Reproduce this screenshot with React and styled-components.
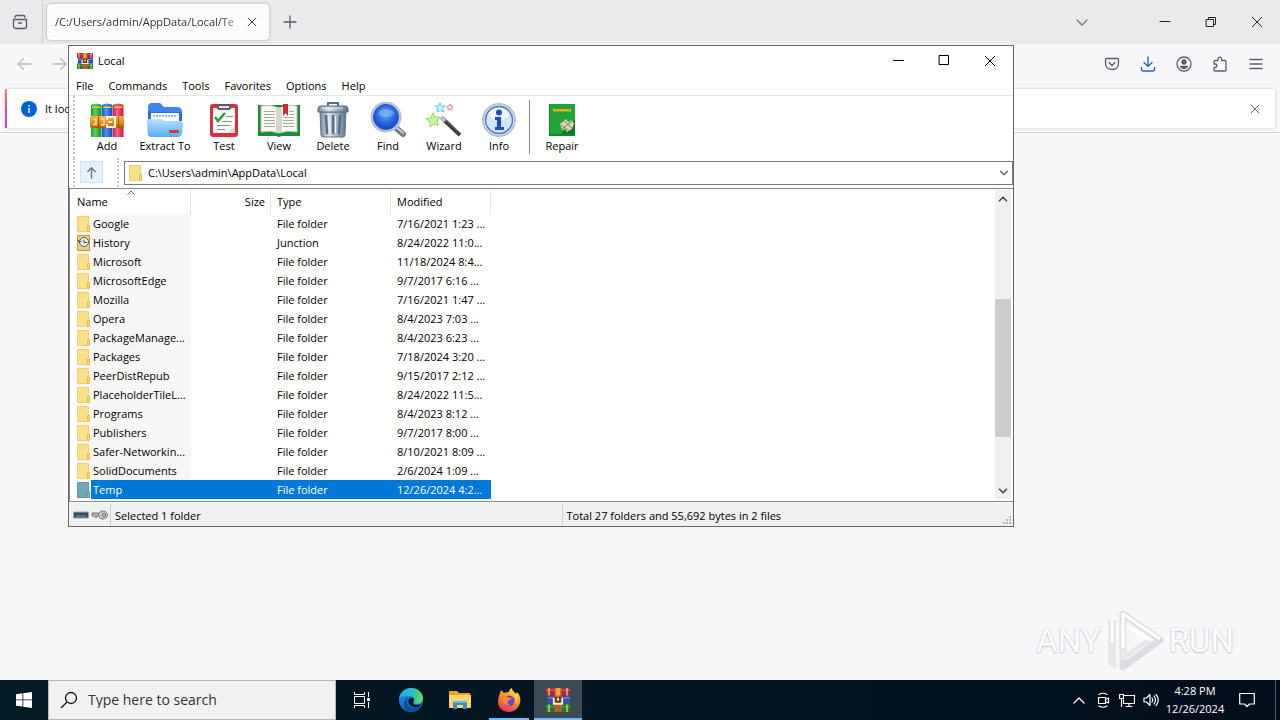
import React, { useState } from 'react'
import styled, { createGlobalStyle, css } from 'styled-components'

const files = [
  ['Google', 'File folder', '7/16/2021 1:23 ...'],
  ['History', 'Junction', '8/24/2022 11:0...'],
  ['Microsoft', 'File folder', '11/18/2024 8:4...'],
  ['MicrosoftEdge', 'File folder', '9/7/2017 6:16 ...'],
  ['Mozilla', 'File folder', '7/16/2021 1:47 ...'],
  ['Opera', 'File folder', '8/4/2023 7:03 ...'],
  ['PackageManage...', 'File folder', '8/4/2023 6:23 ...'],
  ['Packages', 'File folder', '7/18/2024 3:20 ...'],
  ['PeerDistRepub', 'File folder', '9/15/2017 2:12 ...'],
  ['PlaceholderTileL...', 'File folder', '8/24/2022 11:5...'],
  ['Programs', 'File folder', '8/4/2023 8:12 ...'],
  ['Publishers', 'File folder', '9/7/2017 8:00 ...'],
  ['Safer-Networkin...', 'File folder', '8/10/2021 8:09 ...'],
  ['SolidDocuments', 'File folder', '2/6/2024 1:09 ...'],
  ['Temp', 'File folder', '12/26/2024 4:2...'],
]

const menu = ['File', 'Commands', 'Tools', 'Favorites', 'Options', 'Help']

const Line = ({ d, size = 16, color = '#5b5b66', width = 1.3, children }) => (
  <svg
    width={size}
    height={size}
    viewBox='0 0 16 16'
    fill='none'
    stroke={color}
    strokeWidth={width}
    strokeLinecap='round'
    strokeLinejoin='round'
    aria-hidden='true'
  >
    {d && <path d={d} />}
    {children}
  </svg>
)

const Cross = ({ size = 12, color = '#222', width = 1.2 }) => (
  <svg width={size} height={size} viewBox='0 0 12 12' stroke={color} strokeWidth={width} aria-hidden='true'>
    <path d='M1 1l10 10M11 1L1 11' />
  </svg>
)

const Books = ({ size }) => (
  <svg width={size} height={size} viewBox='0 0 16 16' aria-hidden='true'>
    <path fill='#b5204a' d='M0 0h16v5H0z' />
    <path fill='#d8506c' d='M0 1h16v1H0z' />
    <path fill='#3a4fa5' d='M1 5h15v5.500H1z' />
    <path fill='#6d7fd0' d='M1 6h15v1H1z' />
    <path fill='#1b7a35' d='M0 10.500h16V16H0z' />
    <path fill='#3fa04a' d='M0 12h16v1H0z' />
    <path fill='#e8c15a' d='M1.500 0h1v5h-1zM1.500 11h1v5h-1zM13.500 0h1v5h-1zM13.500 11h1v5h-1z' />
    <path fill='#b55f22' d='M5.500 0h5v16h-5z' />
    <path fill='#f0a53a' d='M6.500 0h3v5h-3z' />
    <path fill='#6b3416' d='M5 6h6v5H5z' />
    <path fill='none' stroke='#fff3d8' strokeWidth='1.200' d='M5.200 6.500v4h5.600v-4M8 6.500v2' />
  </svg>
)

const AddIcon = () => (
  <svg width='34' height='36' viewBox='0 0 34 36' aria-hidden='true'>
    <defs>
      <linearGradient id='bookG'>
        <stop offset='0' stopColor='#1f9636' />
        <stop offset='.4' stopColor='#5cd35a' />
        <stop offset='1' stopColor='#128a2c' />
      </linearGradient>
      <linearGradient id='bookB'>
        <stop offset='0' stopColor='#1c50c6' />
        <stop offset='.4' stopColor='#4c92f4' />
        <stop offset='1' stopColor='#1744b4' />
      </linearGradient>
      <linearGradient id='bookR'>
        <stop offset='0' stopColor='#d02042' />
        <stop offset='.4' stopColor='#f8647e' />
        <stop offset='1' stopColor='#c81838' />
      </linearGradient>
      <linearGradient id='belt' x2='0' y2='1'>
        <stop offset='0' stopColor='#f9b53b' />
        <stop offset='.6' stopColor='#e08a1e' />
        <stop offset='1' stopColor='#a9560f' />
      </linearGradient>
    </defs>
    <path fill='url(#bookG)' d='M1 3q5-3 10.500 0v32H1z' />
    <path fill='url(#bookB)' d='M12 3q5-3 10.500 0v32H12z' />
    <path fill='url(#bookR)' d='M23 3q5-3 10.500 0v32H23z' />
    <path fill='#e9c94a' d='M2 4.500h8.500v1.500H2zM13 4.500h8.500v1.500H13zM24 4.500h8.500v1.500H24z' />
    <rect y='14' width='34' height='12' rx='2' fill='url(#belt)' />
    <path fill='none' stroke='#9c5414' d='M8.500 14.500v11M28.500 14.500v11' />
    <path fill='none' stroke='#ffe2a0' strokeWidth='1.500' d='M3 17.500h3v5H3M11 17h3v6h-3' />
    <path fill='none' stroke='#fff4e2' strokeWidth='2' d='M17 18v-3h8v10h-8v-3M18 20h4' />
  </svg>
)

const ExtractIcon = () => (
  <svg width='38' height='36' viewBox='0 0 38 36' aria-hidden='true'>
    <defs>
      <linearGradient id='exFront' x2='0' y2='1'>
        <stop offset='0' stopColor='#b6e2ff' />
        <stop offset='1' stopColor='#5aaaf4' />
      </linearGradient>
    </defs>
    <path fill='#4284ef' d='M2 5q0-4 4-4h7q2 0 3 2l2 2h13q5 0 5 5v9H2z' />
    <path fill='#2e6ddd' d='M2 10h34v9H2z' />
    <path fill='#fff' d='M5 11h28v10H5z' />
    <path stroke='#a4b7cc' strokeWidth='2' strokeDasharray='2 1' d='M7 14h24' />
    <path
      fill='url(#exFront)'
      d='M1 21q-.5-4 3-4H14q2 0 3 1t3 1h14q3.500 0 3 4l-1 8q-.5 4-4 4H5q-3 0-3.300-4z'
    />
    <rect x='23' y='28' width='10' height='3' rx='1' fill='#dc3c2c' />
  </svg>
)

const TestIcon = () => (
  <svg width='30' height='36' viewBox='0 0 30 36' aria-hidden='true'>
    <rect x='1' y='2' width='28' height='33' rx='3' fill='#d9303b' />
    <rect x='4' y='6' width='22' height='25' fill='#fbfbfb' />
    <path fill='#d5d5d8' d='M26 31h-7l7-7z' />
    <rect x='8' y='2' width='14' height='6' rx='2' fill='#585d66' />
    <path fill='#e3e5e8' d='M10 4h10v2H10z' />
    <path fill='none' stroke='#2d9c3a' strokeWidth='2.500' d='M6 15l3 4 7-8' />
    <path stroke='#8b8e94' d='M17 14.500h7M13 19.500h10M8 23.500h13M8 27.500h8' />
  </svg>
)

const ViewIcon = () => (
  <svg width='44' height='36' viewBox='0 0 44 36' aria-hidden='true'>
    <path fill='#1f8a3c' d='M1 3h42v31H25l-3 1-3-1H1z' />
    <path fill='#f9f8f1' stroke='#c5c3b5' d='M4 4q10-2 18 2v25q-8-3-18-1zM40 4q-10-2-18 2v25q8-3 18-1z' />
    <path fill='#d8d6cc' d='M19 5l3 1 3-1v25l-3 1-3-1z' />
    <path
      fill='none'
      stroke='#aaa99f'
      d='M7 9.500h11M7 12.500h11M7 15.500h11M7 18.500h11M7 21.500h11M7 24.500h11M26 15.500h11M26 18.500h11M26 21.500h11M26 24.500h11M32 9.500h5M32 12.500h5'
    />
    <path fill='#cf2632' d='M26 2h5v12l-2.500-3L26 14z' />
  </svg>
)

const DeleteIcon = () => (
  <svg width='34' height='36' viewBox='0 0 34 36' aria-hidden='true'>
    <defs>
      <linearGradient id='bin'>
        <stop offset='0' stopColor='#70869a' />
        <stop offset='.35' stopColor='#dce5ec' />
        <stop offset='1' stopColor='#5f7488' />
      </linearGradient>
    </defs>
    <path fill='none' stroke='#5c6c7a' strokeWidth='2' d='M12 4V1h10v3' />
    <path fill='url(#bin)' stroke='#62788b' d='M4 10h26l-1 23q-.2 2-2 2H7q-1.800 0-2-2z' />
    <path stroke='#587087' strokeWidth='2.500' strokeLinecap='round' d='M10 14l1 17M17 14v17M24 14l-1 17' />
    <path stroke='#eff4f8' d='M12.500 14l1 17M19.500 14v17' />
    <path fill='url(#bin)' stroke='#566b7d' d='M2 10V7q0-3 3-3h24q3 0 3 3v3z' />
    <path stroke='#e5ecf2' d='M5 6h22' />
  </svg>
)

const FindIcon = () => (
  <svg width='38' height='36' viewBox='0 0 38 36' aria-hidden='true'>
    <defs>
      <radialGradient id='lens' cy='.4'>
        <stop offset='0' stopColor='#6cacf7' />
        <stop offset='.6' stopColor='#2c6be0' />
        <stop offset='1' stopColor='#1a4cc8' />
      </radialGradient>
    </defs>
    <path stroke='#777c86' strokeWidth='6' strokeLinecap='round' d='M27 26l7 6' />
    <path stroke='#c9cdd4' strokeWidth='2' strokeLinecap='round' d='M27 25l7 6' />
    <circle cx='17' cy='15' r='14' fill='url(#lens)' stroke='#b4c3dc' strokeWidth='3' />
    <circle cx='17' cy='15' r='12.500' fill='none' stroke='#2a52b5' />
    <ellipse cx='17' cy='11' rx='8' ry='4' fill='#8bc0fa' opacity='.5' />
  </svg>
)

const WizardIcon = () => (
  <svg width='38' height='36' viewBox='0 0 38 36' aria-hidden='true'>
    <path stroke='#3a3b40' strokeWidth='4' d='M17 16l18 17' />
    <path stroke='#8b8d94' strokeWidth='1' d='M18 15l17 16' />
    <path stroke='#bcbec4' strokeWidth='4' d='M16 15l4 4' />
    <path fill='#c8f5a0' stroke='#8fdc5a' d='M8 11l2 4 5 0-3 4 1.500 4.500-4.500-1.500-4 3v-5l-4-3 5-1.500z' />
    <path fill='#c8f2fc' stroke='#5fcdea' d='M15 1l1.500 3H20l-2.500 2.500L19 10l-3.500-1.500L12 10l.500-4L10 4h3.500z' />
    <path fill='#fff0f2' stroke='#ee8396' d='M25 2l1 2h2l-1.500 2 .500 2-2-1-2 1v-2.500L21.500 4H24z' />
  </svg>
)

const InfoIcon = () => (
  <svg width='36' height='36' viewBox='0 0 36 36' aria-hidden='true'>
    <circle cx='18' cy='18' r='16' fill='#e4edf8' stroke='#b9c1cd' strokeWidth='2' />
    <circle cx='18' cy='18' r='13.500' fill='#d2e6ff' stroke='#4a78d2' strokeWidth='1.500' />
    <ellipse cx='18' cy='12' rx='10' ry='6' fill='#f2f8ff' />
    <circle cx='18' cy='10.500' r='3' fill='#1d4cc8' />
    <path fill='#1d4cc8' d='M14 15h6v10h3v3h-9v-3h2v-7h-2z' />
  </svg>
)

const RepairIcon = () => (
  <svg width='28' height='36' viewBox='0 0 28 36' aria-hidden='true'>
    <path fill='#1fa63a' d='M1 2h26v32H1z' />
    <path fill='#12862c' d='M1 2h1v32H1zM2 32h25v2H2z' />
    <path fill='#f0a528' d='M5 7h18v2.500H5z' />
    <path fill='#107a2a' d='M27 17v15H13z' />
    <path fill='#d9d6b4' d='M12 22l6-5 2 3 4-2 2 4-2 5-5 3-2-3-3 1z' />
    <path stroke='#7f7c5c' d='M16 19l8 7M13 23l8 6M14 27l10-8' />
  </svg>
)

const FolderIcon = ({ name, selected }) => (
  <svg width='14' height='16' viewBox='0 0 14 16' aria-hidden='true'>
    <path fill={selected ? '#6fa9b6' : '#fbe08a'} stroke={selected ? '#5e9aaa' : '#ecd07a'} d='M.500.500h11v15H.500z' />
    <path fill={selected ? '#82b6ba' : '#ffd766'} stroke={selected ? '#5e9aaa' : '#e5c050'} d='M10.500 9.500h2v6h-2z' />
    {name === 'History' && (
      <>
        <path fill='#e9cf7c' stroke='#b79c45' d='M.500.500h12v15H.500z' />
        <circle cx='7' cy='7' r='4.500' fill='#f7f7f4' stroke='#555' />
        <path fill='none' stroke='#333' d='M7 4.500V7.500h3M1 5l1.500 2.500L4.500 6' />
      </>
    )}
  </svg>
)

const tools = [
  { label: 'Add', width: 54, Icon: AddIcon },
  { label: 'Extract To', width: 62, Icon: ExtractIcon },
  { label: 'Test', width: 56, Icon: TestIcon },
  { label: 'View', width: 54, Icon: ViewIcon },
  { label: 'Delete', width: 54, Icon: DeleteIcon },
  { label: 'Find', width: 56, Icon: FindIcon },
  { label: 'Wizard', width: 56, Icon: WizardIcon },
  { label: 'Info', width: 54, Icon: InfoIcon },
]

const FirefoxBar = () => (
  <>
    <TabStrip>
      <RecentButton aria-label='Recent browsing'>
        <Line d='M1.500 5.500h13v7a2 2 0 0 1-2 2h-9a2 2 0 0 1-2-2zM3 3.500V3q0-1.500 1.500-1.500h7Q13 1.500 13 3v.500M6.500 9h3' />
      </RecentButton>
      <Tab>
        <TabTitle>/C:/Users/admin/AppData/Local/Te</TabTitle>
        <TabClose aria-label='Close tab'>
          <Cross size={10} color='#444' />
        </TabClose>
      </Tab>
      <NewTab aria-label='New tab'>
        <Line d='M8 2v12M2 8h12' />
      </NewTab>
      <Spacer />
      <ListTabs aria-label='List all tabs'>
        <Line d='M3 6l5 5 5-5' color='#777' />
      </ListTabs>
      <CaptionButton aria-label='Minimize browser'>
        <Line d='M3 7.500h10' color='#222' width={1} />
      </CaptionButton>
      <CaptionButton aria-label='Restore browser'>
        <Line d='M3.500 5.500h7v7h-7zM5.500 5V3.500h7v7H11' color='#222' width={1} />
      </CaptionButton>
      <CaptionButton aria-label='Close browser'>
        <Cross color='#222' width={1} />
      </CaptionButton>
    </TabStrip>
    <NavBar>
      <NavButton aria-label='Back'>
        <Line d='M15 8H2M7.500 2.500L2 8l5.500 5.500' color='#b9b9c0' />
      </NavButton>
      <NavButton aria-label='Forward'>
        <Line d='M1 8h13M8.500 2.500L14 8l-5.500 5.500' color='#b9b9c0' />
      </NavButton>
      <Spacer />
      <NavButton aria-label='Save to Pocket'>
        <Line d='M2.500 2.500h11q1 0 1 1V7q0 6.500-6.500 6.500T1.500 7V3.500q0-1 1-1zM5 6.500l3 3 3-3' />
      </NavButton>
      <NavButton aria-label='Downloads'>
        <Line d='M8 1v9.500M4 6.500l4 4 4-4M1.500 11.500V13q0 2 2 2h9q2 0 2-2v-1.500' color='#2a62d0' width={1.4} />
      </NavButton>
      <NavButton aria-label='Account'>
        <Line>
          <circle cx='8' cy='8' r='7' />
          <circle cx='8' cy='6' r='2' fill='#5b5b66' />
          <path fill='#5b5b66' d='M4.500 10.500h7q-1 2-3.500 2t-3.500-2z' />
        </Line>
      </NavButton>
      <NavButton aria-label='Extensions'>
        <Line d='M2 5.500q0-1 1-1h3V3a1.800 1.800 0 0 1 3.600 0v1.500H13q1 0 1 1V14q0 1-1 1H3q-1 0-1-1v-2.500h1.500a1.800 1.800 0 0 0 0-3.500H2z' />
      </NavButton>
      <NavButton aria-label='Menu'>
        <Line d='M2 3.500h12M2 8h12M2 12.500h12' />
      </NavButton>
    </NavBar>
    <NoticeArea>
      <Notice>
        <svg width='16' height='16' viewBox='0 0 16 16' aria-hidden='true'>
          <circle cx='8' cy='8' r='8' fill='#0060df' />
          <path stroke='#fff' strokeWidth='1.500' d='M8 7v5M8 4v1.500' />
        </svg>
        <NoticeText>It loo</NoticeText>
        <NoticeClose aria-label='Dismiss'>
          <Cross size={10} color='#444' width={1} />
        </NoticeClose>
      </Notice>
    </NoticeArea>
  </>
)

const FileList = () => {
  const [selected, setSelected] = useState('Temp')

  return (
    <ListPane>
      <Table>
        <colgroup>
          <col width='121' />
          <col width='80' />
          <col width='120' />
          <col width='100' />
        </colgroup>
        <thead>
          <tr>
            <Th>
              <SortMark width='8' height='5' viewBox='0 0 8 5'>
                <path fill='none' stroke='#666' d='M.500 4.500L4 1l3.500 3.500' />
              </SortMark>
              Name
            </Th>
            <Th $right>Size</Th>
            <Th>Type</Th>
            <Th>Modified</Th>
          </tr>
        </thead>
        <tbody>
          {files.map(([name, type, modified]) => (
            <Row key={name} $selected={name === selected} onClick={() => setSelected(name)}>
              <NameCell>
                <NameInner>
                  <FolderIcon name={name} selected={name === selected} />
                  <NameLabel>{name}</NameLabel>
                </NameInner>
              </NameCell>
              <Td />
              <Td>{type}</Td>
              <Td>{modified}</Td>
            </Row>
          ))}
        </tbody>
      </Table>
      <ScrollBar>
        <ScrollButton aria-label='Scroll up'>
          <Line d='M4 10l4-4 4 4' size={14} color='#505050' width={2} />
        </ScrollButton>
        <ScrollTrack>
          <Thumb />
        </ScrollTrack>
        <ScrollButton aria-label='Scroll down'>
          <Line d='M4 6l4 4 4-4' size={14} color='#505050' width={2} />
        </ScrollButton>
      </ScrollBar>
    </ListPane>
  )
}

const ArchiveWindow = () => {
  const [path, setPath] = useState('C:\\Users\\admin\\AppData\\Local')

  return (
    <Window>
      <TitleBar>
        <Books size={16} />
        <Title>Local</Title>
        <CaptionButton aria-label='Minimize'>
          <Line d='M3.500 7.500h10' color='#000' width={1} />
        </CaptionButton>
        <CaptionButton aria-label='Maximize'>
          <Line d='M3.500 2.500h9v9h-9z' color='#000' width={1} />
        </CaptionButton>
        <CaptionButton aria-label='Close'>
          <Cross color='#000' width={1} />
        </CaptionButton>
      </TitleBar>
      <MenuBar>
        {menu.map((item) => (
          <MenuItem key={item}>{item}</MenuItem>
        ))}
      </MenuBar>
      <ToolBar>
        <Grip />
        {tools.map(({ label, width, Icon }) => (
          <Tool key={label} $width={width}>
            <Icon />
            {label}
          </Tool>
        ))}
        <Divider />
        <Tool $width={58}>
          <RepairIcon />
          Repair
        </Tool>
      </ToolBar>
      <AddressRow>
        <Grip />
        <UpButton aria-label='Up one level'>
          <Line d='M8 14V3M4 7l4-4 4 4' color='#6f7c87' width={1.5} size={15} />
        </UpButton>
        <Grip />
        <AddressBox>
          <FolderIcon />
          <AddressInput aria-label='Path' value={path} onChange={(e) => setPath(e.target.value)} />
          <DropButton aria-label='Show paths'>
            <Line d='M4 6l4 4 4-4' color='#555' size={14} />
          </DropButton>
        </AddressBox>
      </AddressRow>
      <FileList />
      <StatusBar>
        <StatusIcons>
          <svg width='16' height='8' viewBox='0 0 16 8' aria-hidden='true'>
            <path fill='#3c4a54' stroke='#9aa8b3' d='M.500 1h15v6H.500z' />
            <path stroke='#6aa6b4' d='M3 5h10' />
          </svg>
          <svg width='18' height='12' viewBox='0 0 18 12' aria-hidden='true'>
            <path fill='#b5b5b5' stroke='#7c7c7c' d='M1 4h8v3H6l-1 2-1.500-2H1z' />
            <ellipse cx='12' cy='6' rx='4.500' ry='4' fill='#c9c9c9' stroke='#7c7c7c' />
            <circle cx='13' cy='6' r='1.500' fill='#fff' stroke='#555' />
          </svg>
        </StatusIcons>
        <StatusCell>Selected 1 folder</StatusCell>
        <StatusCell>Total 27 folders and 55,692 bytes in 2 files</StatusCell>
        <Resize width='10' height='10' viewBox='0 0 10 10'>
          <path fill='#bbb' d='M7 1h2v2H7zM4 4h2v2H4zM7 4h2v2H7zM1 7h2v2H1zM4 7h2v2H4zM7 7h2v2H7z' />
        </Resize>
      </StatusBar>
    </Window>
  )
}

const Brand = () => (
  <Watermark>
    <span>ANY</span>
    <svg width='60' height='66' viewBox='0 0 60 66' aria-hidden='true'>
      <g fill='none' strokeLinejoin='round'>
        <path stroke='#dedee2' strokeWidth='7' d='M7 12v44M18 6l37 26-37 27z' />
        <path stroke='#e8e8eb' strokeWidth='5' d='M7 12v44l5 2M18 14v36l26-18' />
        <path stroke='#ffffff' strokeWidth='3' d='M7 34V12l4-3M18 40V6l37 25M22 18l22 14' />
      </g>
    </svg>
    <span>RUN</span>
  </Watermark>
)

const TaskBar = () => (
  <Tasks>
    <StartButton aria-label='Start'>
      <svg width='16' height='16' viewBox='0 0 16 16' fill='#fff' aria-hidden='true'>
        <path d='M0 2.200l6.500-.900v6.200H0zM7.300 1.200L16 0v7.500H7.300zM0 8.300h6.500v6.300L0 13.700zM7.300 8.300H16V16l-8.700-1.200z' />
      </svg>
    </StartButton>
    <SearchBox>
      <svg width='18' height='18' viewBox='0 0 18 18' fill='none' stroke='#111' strokeWidth='1.300' aria-hidden='true'>
        <circle cx='11' cy='7' r='5.500' />
        <path d='M7 11l-6 6' />
      </svg>
      <SearchInput aria-label='Search' placeholder='Type here to search' />
    </SearchBox>
    <Apps>
      <AppButton aria-label='Task view'>
        <svg width='18' height='18' viewBox='0 0 18 18' fill='none' stroke='#fff' aria-hidden='true'>
          <path d='M1.500 1v2.500h10V1M1.500 17v-2.500h10V17M1.500 5.500h10v7h-10zM15.500 1v5M15.500 11v6' />
          <path fill='#fff' d='M14.500 7.500h2v2h-2z' />
        </svg>
      </AppButton>
      <AppButton aria-label='Edge'>
        <svg width='24' height='24' viewBox='0 0 24 24' aria-hidden='true'>
          <defs>
            <linearGradient id='edgeTop'>
              <stop offset='0' stopColor='#1fa6e8' />
              <stop offset='.6' stopColor='#2fc2b8' />
              <stop offset='1' stopColor='#68d94c' />
            </linearGradient>
            <linearGradient id='edgeLow' x2='0' y2='1'>
              <stop offset='0' stopColor='#1a8fe0' />
              <stop offset='1' stopColor='#1266c4' />
            </linearGradient>
          </defs>
          <circle cx='12' cy='12' r='12' fill='url(#edgeLow)' />
          <path fill='url(#edgeTop)' d='M0 11C1 4 6 0 12 0c7 0 12 5 12 10 0 4-3 6-6 6-3 0-4-1-3-3 1-3-1-5-5-5-5 0-9 1-10 3z' />
          <path fill='#0c4f97' d='M9 10c-2 3-1 9 5 10 3 .500 6-.500 8-2-2 4-6 6-10 6-5-1-8-5-7-9 .500-3 2-5 4-5z' />
          <path fill='#031a26' d='M14 10c-3-1-5 1-4.500 4 .500 4 5 6 10 5l4-4c-3 2-7 3-9 1-1-1 .500-2 .500-3.500 0-1-.300-2-1-2.500z' />
        </svg>
      </AppButton>
      <AppButton aria-label='File Explorer'>
        <svg width='22' height='20' viewBox='0 0 22 20' aria-hidden='true'>
          <path fill='#e9a229' d='M0 1h8l2 2h11v4H0z' />
          <path fill='#ffd767' d='M0 5h22v13H0z' />
          <path fill='#3b8fc9' d='M4 11h14v8h-4v-4H8v4H4z' />
          <path fill='#69b9e8' d='M4 11h14v2H4z' />
        </svg>
      </AppButton>
      <AppButton aria-label='Firefox' $bar={40}>
        <svg width='24' height='24' viewBox='0 0 24 24' aria-hidden='true'>
          <defs>
            <linearGradient id='fox' x1='.8' y1='0' x2='.3' y2='1'>
              <stop offset='0' stopColor='#ffe848' />
              <stop offset='.45' stopColor='#ff9626' />
              <stop offset='1' stopColor='#f02a60' />
            </linearGradient>
          </defs>
          <path
            fill='url(#fox)'
            d='M3 5l1-3 3 3c2-1 4-1 5-1 0-2 1-3 3-4 0 3 3 4 4 6l1-2c3 3 4 7 3 11-1 5-6 9-11 9C6 24 1 20 1 14c0-4 1-6 2-9z'
          />
          <circle cx='12' cy='13' r='5.500' fill='#7540d4' />
          <path fill='#ff8b2b' d='M5 9c3-2 5-1 7 1l3 0c-1 2-3 2-4 3-1 2 0 4 3 4-4 2-9-1-9-8z' />
          <path fill='#ffd646' d='M14 4c4 2 6 7 4 12 3-3 3-8 1-10z' />
        </svg>
      </AppButton>
      <AppButton aria-label='WinRAR' $bar={48} $active>
        <Books size={24} />
      </AppButton>
    </Apps>
    <Spacer />
    <TrayButton aria-label='Show hidden icons'>
      <Line d='M3 11l5-5 5 5' color='#fff' />
    </TrayButton>
    <TrayButton aria-label='Meet now'>
      <Line color='#fff' width={1.2} d='M3.500 5.500h7v6h-7zM10.500 7.500l3-1.500v5l-3-1.500M4 2.500q4-2.500 8 0M4 14q4 2.500 8 0' />
    </TrayButton>
    <TrayButton aria-label='Network'>
      <Line color='#fff' width={1.2} d='M5 3.500h10.500v8H4.500V8M7 14.500h6M10 11.500v3M.500 2.500h4v4h-4zM2.500 6.500v8' />
    </TrayButton>
    <TrayButton aria-label='Volume'>
      <Line color='#fff' width={1.2} d='M1 6h2.500L7 2.500v11L3.500 10H1zM9 6q1.500 2 0 4M11 4q3 4 0 8M13 2.500q4.500 5.500 0 11' />
    </TrayButton>
    <Clock>
      <time>4:28 PM</time>
      <time>12/26/2024</time>
    </Clock>
    <NoticesButton aria-label='Notifications'>
      <Line color='#fff' d='M.700 1.500h14.600v10.500H10.500L8 14.500 5.500 12H.700z' width={1.2} />
    </NoticesButton>
    <ShowDesktop aria-label='Show desktop' />
  </Tasks>
)

const App = () => (
  <Desktop>
    <GlobalStyle />
    <Browser>
      <FirefoxBar />
      <Brand />
    </Browser>
    <ArchiveWindow />
    <TaskBar />
  </Desktop>
)

export default App

const GlobalStyle = createGlobalStyle`
  * {
    box-sizing: border-box;
  }

  body {
    margin: 0;
    font-family: 'Open Sans', 'Noto Sans', sans-serif;
    font-size: 11px;
    line-height: 16px;
    color: #000;
  }

  button,
  input {
    font: inherit;
    color: inherit;
    border: none;
    background: none;
    padding: 0;
    outline: none;
  }

  svg {
    flex: none;
    display: block;
  }
`

const Desktop = styled.div`
  position: relative;
  display: flex;
  flex-direction: column;
  min-height: 100vh;
`

const Browser = styled.main`
  position: relative;
  flex: 1;
  background: #f8f8fb;
`

const Spacer = styled.div`
  flex: 1;
`

const IconButton = styled.button`
  display: flex;
  align-items: center;
  justify-content: center;
  flex: none;
`

const TabStrip = styled.div`
  display: flex;
  align-items: center;
  height: 44px;
  background: #eaeaed;
`

const RecentButton = styled(IconButton)`
  width: 43px;
  height: 44px;
  padding-right: 2px;
  border-right: 1px solid #cfcfd4;
`

const Tab = styled.div`
  display: flex;
  align-items: center;
  width: 222px;
  height: 36px;
  margin-left: 4px;
  padding: 0 9px 0 8px;
  border-radius: 4px;
  background: #fcfcfd;
  box-shadow: 0 0 3px rgba(0, 0, 0, 0.3);
`

const TabTitle = styled.span`
  flex: 1;
  overflow: hidden;
  white-space: nowrap;
  color: #333;
  mask-image: linear-gradient(to left, rgba(0, 0, 0, 0.2), #000 24px);
`

const TabClose = styled(IconButton)`
  width: 16px;
  height: 16px;
`

const NewTab = styled(IconButton)`
  width: 42px;
  height: 36px;
`

const ListTabs = styled(IconButton)`
  width: 36px;
  height: 36px;
  margin-right: 42px;
`

const CaptionButton = styled(IconButton)`
  width: 46px;
  height: 30px;
`

const NavBar = styled.div`
  display: flex;
  align-items: center;
  height: 40px;
  padding: 0 6px;
`

const NavButton = styled(IconButton)`
  width: 36px;
  height: 32px;
`

const NoticeArea = styled.div`
  padding: 5px 5px 4px;
  border-bottom: 1px solid #cfcfd4;
`

const Notice = styled.div`
  display: flex;
  align-items: center;
  gap: 8px;
  height: 39px;
  padding: 0 13px 0 14px;
  border-left: 2px solid;
  border-image: linear-gradient(#f58a5a, #d8558b, #9059d8) 1;
  background: #fff;
  box-shadow: 0 0 3px rgba(0, 0, 0, 0.18);
`

const NoticeText = styled.span`
  flex: 1;
`

const NoticeClose = styled(IconButton)`
  width: 14px;
  height: 16px;
`

const Watermark = styled.div`
  position: absolute;
  right: 46px;
  bottom: 6px;
  display: flex;
  align-items: center;
  gap: 4px;
  font-family: Roboto, sans-serif;
  font-size: 33px;
  line-height: 40px;
  color: #fdfdfe;
  text-shadow: 0 1px 2px #c4c4c8, 0 0 2px #ccc;
`

// a window lying on the desktop
const Window = styled.section`
  position: absolute;
  top: 45px;
  left: 68px;
  right: 266px;
  border: 1px solid #66666b;
  background: #fff;
`

const TitleBar = styled.header`
  display: flex;
  align-items: center;
  height: 30px;
  padding-left: 8px;
`

const Title = styled.h1`
  flex: 1;
  margin: 0;
  padding-left: 5px;
  font-size: 11px;
  font-weight: normal;
`

const MenuBar = styled.nav`
  display: flex;
  gap: 1px;
  height: 20px;
  border-bottom: 1px solid #e6e6e6;
`

const MenuItem = styled.button`
  padding: 0 7px;
  line-height: 19px;
`

const ToolBar = styled.div`
  display: flex;
  height: 62px;
  padding: 0 4px;
`

const Grip = styled.div`
  flex: none;
  width: 7px;
  border-left: 2px dotted #c6c6c6;
`

const Tool = styled.button`
  display: flex;
  flex-direction: column;
  align-items: center;
  flex: none;
  width: ${(props) => props.$width}px;
  padding-top: 6px;
  white-space: nowrap;
`

const Divider = styled.div`
  width: 1px;
  height: 54px;
  margin: 4px 3px;
  background: #888;
`

const AddressRow = styled.div`
  display: flex;
  height: 29px;
  padding-left: 4px;
`

const UpButton = styled(IconButton)`
  width: 23px;
  height: 22px;
  margin: 3px 14px 3px 0;
  border: 1px solid #cbe4f7;
  background: #e5f1fb;
`

const AddressBox = styled.div`
  display: flex;
  align-items: center;
  flex: 1;
  height: 24px;
  margin-top: 3px;
  padding-left: 4px;
  border: 1px solid #7a7a7a;
`

const AddressInput = styled.input`
  flex: 1;
  padding-left: 5px;
`

const DropButton = styled(IconButton)`
  width: 16px;
  height: 22px;
`

const ListPane = styled.div`
  display: flex;
  justify-content: space-between;
  padding: 1px 2px 2px 0;
  border: 1px solid #828790;
  border-width: 1px 0 1px 1px;
  margin-top: 1px;
`

const Table = styled.table`
  width: 421px;
  table-layout: fixed;
  border-spacing: 0;
`

const Th = styled.th`
  position: relative;
  height: 24px;
  padding: 0 5px 0 6px;
  border-right: 1px solid #e5e5e5;
  font-weight: normal;
  text-align: ${(props) => (props.$right ? 'right' : 'left')};

  &:first-child {
    padding-left: 7px;
  }
`

const SortMark = styled.svg`
  position: absolute;
  top: 0;
  left: 57px;
`

const Td = styled.td`
  height: 19px;
  padding: 0 0 0 6px;
  white-space: nowrap;
`

const NameCell = styled(Td)`
  padding-left: 7px;
`

const NameInner = styled.div`
  display: flex;
  align-items: center;
  background: #f7f7f7;
`

const NameLabel = styled.span`
  flex: 1;
  padding-left: 2px;
  line-height: 19px;
`

const Row = styled.tr`
  ${(props) =>
    props.$selected &&
    css`
      color: #fff;

      ${Td}:not(:first-child),
      ${NameLabel} {
        background: #0078d7;
      }
    `}
`

const ScrollBar = styled.div`
  display: flex;
  flex-direction: column;
  width: 16px;
  background: #f0f0f0;
`

const ScrollButton = styled(IconButton)`
  height: 17px;
`

const ScrollTrack = styled.div`
  flex: 1;
  display: grid;
  grid-template-rows: 92fr 138fr 45fr;
`

const Thumb = styled.div`
  grid-row: 2;
  background: #cdcdcd;
`

const StatusBar = styled.footer`
  display: flex;
  align-items: center;
  position: relative;
  height: 23px;
  margin-top: 1px;
  background: #f0f0f0;
`

const StatusIcons = styled.div`
  display: flex;
  align-items: center;
  gap: 2px;
  width: 41px;
  padding-left: 4px;
`

const StatusCell = styled.div`
  flex: 1;
  padding: 2px 0 0 4px;
  border-left: 1px solid #d0d0d0;
  line-height: 20px;
`

const Resize = styled.svg`
  position: absolute;
  right: 1px;
  bottom: 1px;
`

const Tasks = styled.footer`
  display: flex;
  height: 40px;
  color: #fff;
  background: linear-gradient(to right, #021b24, #020d1c);
`

const StartButton = styled(IconButton)`
  width: 48px;
`

const SearchBox = styled.div`
  display: flex;
  align-items: center;
  gap: 10px;
  width: 288px;
  padding: 0 11px;
  border: 1px solid #b8b8b8;
  background: #f2f2f2;
`

const SearchInput = styled.input`
  flex: 1;
  min-width: 0;
  font-size: 14px;
  color: #222;

  &::placeholder {
    color: #333;
    opacity: 1;
  }
`

const Apps = styled.div`
  display: flex;
  gap: 1px;
  padding-left: 2px;
`

const AppButton = styled(IconButton)`
  width: 48px;
  background: ${(props) => (props.$active ? '#3a4a52' : 'none')};
  ${(props) =>
    props.$bar &&
    css`
      background-image: linear-gradient(#76b9ed, #76b9ed);
      background-size: ${props.$bar}px 2px;
      background-position: bottom center;
      background-repeat: no-repeat;
    `}
`

const TrayButton = styled(IconButton)`
  width: 24px;
`

const Clock = styled.div`
  display: flex;
  flex-direction: column;
  align-items: center;
  width: 64px;
  padding-top: 2px;
  line-height: 18px;
`

const NoticesButton = styled(IconButton)`
  width: 40px;
`

const ShowDesktop = styled.button`
  width: 5px;
  margin-left: 8px;
  border-left: 1px solid #4c5660;
`
